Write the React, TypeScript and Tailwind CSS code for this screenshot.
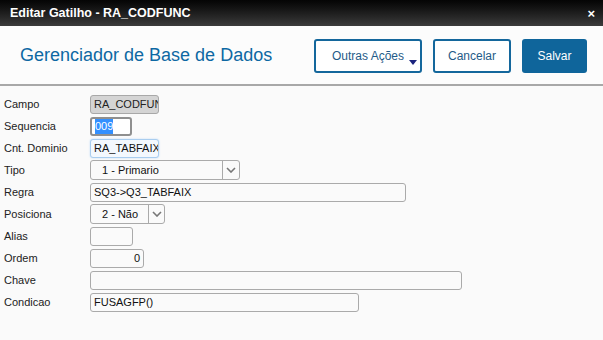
import React from 'react';

const font = { fontFamily: '"Liberation Sans", Arial, sans-serif' };

const Label = ({ children }: { children: React.ReactNode }) => (
  <div className="w-[90px] shrink-0 pl-[4px] text-[11px] text-[#222]">{children}</div>
);

const Chevron = () => (
  <svg width="10" height="6" viewBox="0 0 10 6">
    <path d="M1 1 L5 5 L9 1" fill="none" stroke="#777" strokeWidth="1.6" />
  </svg>
);

const Select = ({ value, width, textWidth }: { value: string; width: string; textWidth: string }) => (
  <div className={`flex h-[20px] ${width} items-stretch rounded-[3px] border border-[#aaa] bg-[#fafafa]`}>
    <div className={`flex ${textWidth} items-center border-r border-[#aaa] pl-[11px] text-[11px] text-[#111]`}>{value}</div>
    <div className="flex flex-1 items-center justify-center">
      <Chevron />
    </div>
  </div>
);

interface InputProps {
  className?: string;
  skin?: string;
  children?: React.ReactNode;
}

const Input = ({ className = '', skin = 'border border-[#aaa] bg-[#fafafa]', children }: InputProps) => (
  <div className={`flex h-[19px] items-center overflow-hidden whitespace-nowrap rounded-[3px] px-[3px] text-[11px] text-[#111] ${skin} ${className}`}>
    {children}
  </div>
);

const Row = ({ label, children }: { label: string; children: React.ReactNode }) => (
  <div className="flex h-[22px] items-center">
    <Label>{label}</Label>
    {children}
  </div>
);

export default function App() {
  return (
    <div style={font} className="h-[340px] w-[603px] overflow-hidden bg-[#fafafa]">
      <div className="flex h-[26px] items-center justify-between bg-gradient-to-b from-[#050505] to-[#3c3c3c] pl-[10px] pr-[8px]">
        <span className="text-[12.5px] font-bold text-white">Editar Gatilho - RA_CODFUNC</span>
        <span className="text-[13px] font-bold leading-none text-white">×</span>
      </div>
      <div className="flex h-[60px] items-center justify-between border-b-2 border-[#a8a8a8] bg-[#fcfcfc] pl-[20px] pr-[16px]">
        <h1 className="text-[18px] text-[#0d68a3]">Gerenciador de Base de Dados</h1>
        <div className="flex items-center gap-[11px] pt-[1px]">
          <button className="relative h-[34px] w-[108px] rounded-[3px] border-2 border-[#14679c] bg-white text-[12px] text-[#1f5b88]">
            Outras Ações
            <span className="absolute bottom-[6px] right-[3px] h-0 w-0 border-x-[4px] border-t-[5px] border-x-transparent border-t-[#1a237e]" />
          </button>
          <button className="h-[34px] w-[78px] rounded-[3px] border-2 border-[#14679c] bg-white text-[12px] text-[#1f5b88]">
            Cancelar
          </button>
          <button className="h-[34px] w-[65px] rounded-[3px] bg-[#0f659b] text-[12px] text-white">Salvar</button>
        </div>
      </div>
      <div className="pt-[7px]">
        <Row label="Campo">
          <Input className="w-[69px] text-[#222]" skin="border border-[#a8a8a8] bg-[#d4d4d4]">RA_CODFUNC</Input>
        </Row>
        <Row label="Sequencia">
          <Input className="w-[42px] px-[2px]" skin="border-2 border-[#8f8f8f] bg-white">
            <span className="bg-[#3390ff] text-white">009</span>
          </Input>
        </Row>
        <Row label="Cnt. Dominio">
          <Input className="w-[69px]" skin="border border-[#a9cdef] bg-[#f3f8fe] shadow-[0_0_2px_#b9d8f5]">RA_TABFAIXA</Input>
        </Row>
        <Row label="Tipo">
          <Select value="1 - Primario" width="w-[150px]" textWidth="w-[132px]" />
        </Row>
        <Row label="Regra">
          <Input className="w-[316px]">SQ3-&gt;Q3_TABFAIX</Input>
        </Row>
        <Row label="Posiciona">
          <Select value="2 - Não" width="w-[75px]" textWidth="w-[58px]" />
        </Row>
        <Row label="Alias">
          <Input className="w-[43px]" />
        </Row>
        <Row label="Ordem">
          <Input className="w-[54px] justify-end">0</Input>
        </Row>
        <Row label="Chave">
          <Input className="w-[372px]" />
        </Row>
        <Row label="Condicao">
          <Input className="w-[269px]">FUSAGFP()</Input>
        </Row>
      </div>
    </div>
  );
}
